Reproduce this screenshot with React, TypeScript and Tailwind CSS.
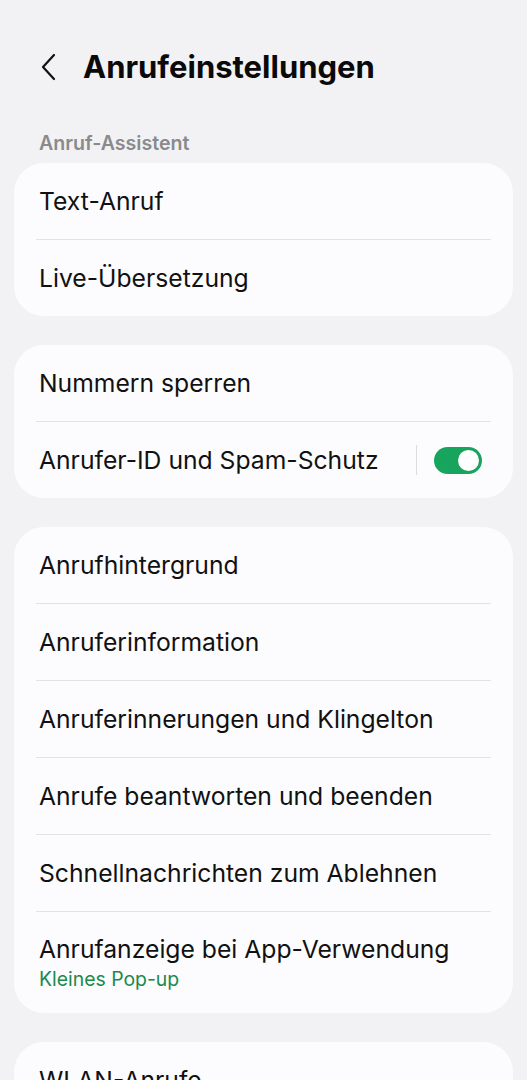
import React from "react";

const font = { fontFamily: "Inter, 'Noto Sans', sans-serif" };

function Row({ title, sub, divider = true, toggle = false, tall = false }: { title: string; sub?: string; divider?: boolean; toggle?: boolean; tall?: boolean }) {
  return (
    <div className="relative">
      <div className={`flex items-center pl-[25px] pr-[31px] ${tall ? "h-[101px]" : "h-[76px]"}`}>
        <div className="flex-1 flex flex-col">
          <span className="text-[24.7px] leading-[30px] text-[#111]">{title}</span>
          {sub && <span className="text-[19.4px] leading-[24px] text-[#1a8a4d] mt-[3px]">{sub}</span>}
        </div>
        {toggle && (
          <div className="flex items-center">
            <div className="w-px h-[30px] bg-[#dcdcde] mr-[17px]" />
            <div className="w-[48px] h-[27px] rounded-full bg-[#17a55d] flex items-center justify-end pr-[3px]">
              <div className="w-[21px] h-[21px] rounded-full bg-white" />
            </div>
          </div>
        )}
      </div>
      {divider && <div className="mx-[22px] h-px bg-[#e3e3e5]" />}
    </div>
  );
}

export default function App() {
  return (
    <div className="w-[527px] h-[1080px] overflow-hidden bg-[#f2f2f4]" style={font}>
      <div className="flex items-center h-[66px] mt-[34px]">
        <svg width="18" height="28" viewBox="0 0 18 28" className="ml-[39px]">
          <path d="M15 2 L4 14 L15 26" fill="none" stroke="#111" strokeWidth="2.2" strokeLinecap="round" strokeLinejoin="round" />
        </svg>
        <h1 className="ml-[26px] text-[31px] font-bold text-[#0a0a0a]">Anrufeinstellungen</h1>
      </div>
      <div className="pl-[39px] mt-[29px] h-[30px] flex items-center text-[19.6px] font-semibold text-[#8a8a8c]">Anruf-Assistent</div>
      <div className="px-[14px] mt-[4px] flex flex-col gap-[29px]">
        <div className="bg-[#fcfcfe] rounded-[30px]">
          <Row title="Text-Anruf" />
          <Row title="Live-Übersetzung" divider={false} />
        </div>
        <div className="bg-[#fcfcfe] rounded-[30px]">
          <Row title="Nummern sperren" />
          <Row title="Anrufer-ID und Spam-Schutz" divider={false} toggle />
        </div>
        <div className="bg-[#fcfcfe] rounded-[30px]">
          <Row title="Anrufhintergrund" />
          <Row title="Anruferinformation" />
          <Row title="Anruferinnerungen und Klingelton" />
          <Row title="Anrufe beantworten und beenden" />
          <Row title="Schnellnachrichten zum Ablehnen" />
          <Row title="Anrufanzeige bei App-Verwendung" sub="Kleines Pop-up" divider={false} tall />
        </div>
        <div className="bg-[#fcfcfe] rounded-[30px]">
          <Row title="WLAN-Anrufe" divider={false} />
        </div>
      </div>
    </div>
  );
}
